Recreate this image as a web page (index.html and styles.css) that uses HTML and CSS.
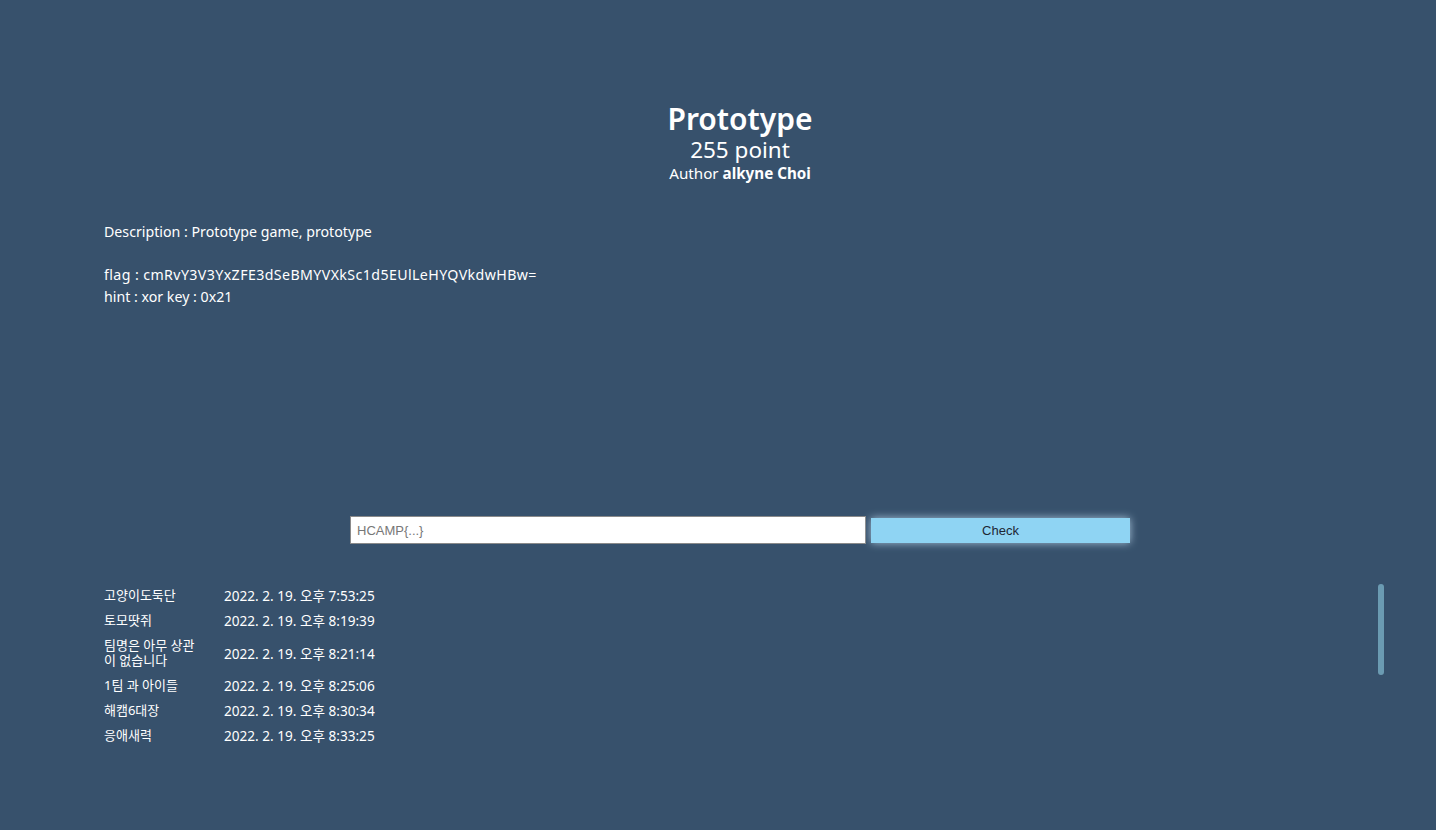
FILE: index.html
```html
<!DOCTYPE html>
<html lang="ko">
<head>
    <meta charset="UTF-8">
    <title>Prototype</title>
    <link rel="stylesheet" href="styles.css">
</head>
<body>

<div class="page">
    <div class="header">
        <h1>Prototype</h1>
        <div class="point">255 point</div>
        <div class="author">Author <b>alkyne Choi</b></div>
    </div>

    <div class="desc">
        <div>Description : Prototype game, prototype</div>
        <div>&nbsp;</div>
        <div class="flag">flag : cmRvY3V3YxZFE3dSeBMYVXkSc1d5EUlLeHYQVkdwHBw=</div>
        <div>hint : xor key : 0x21</div>
    </div>

    <form class="flag-form" onsubmit="return false">
        <input type="text" class="flag-input" placeholder="HCAMP{...}">
        <button class="check-btn">Check</button>
    </form>

    <div class="records">
        <div class="rows">
            <div class="row"><div class="team">고양이도둑단</div><div class="time">2022. 2. 19. 오후 7:53:25</div></div>
            <div class="row"><div class="team">토모땃쥐</div><div class="time">2022. 2. 19. 오후 8:19:39</div></div>
            <div class="row"><div class="team">팀명은 아무 상관이 없습니다</div><div class="time">2022. 2. 19. 오후 8:21:14</div></div>
            <div class="row"><div class="team">1팀 과 아이들</div><div class="time">2022. 2. 19. 오후 8:25:06</div></div>
            <div class="row"><div class="team">해캠6대장</div><div class="time">2022. 2. 19. 오후 8:30:34</div></div>
            <div class="row"><div class="team">응애새력</div><div class="time">2022. 2. 19. 오후 8:33:25</div></div>
        </div>
        <div class="thumb"></div>
    </div>
</div>

</body>
</html>
```

FILE: styles.css
```css
body {
    margin: 0;
    background-color: #37516c;
    color: #fff;
    font-family: 'Noto Sans', 'Noto Sans CJK KR', sans-serif;
}

.page {
    padding: 100px 60px 80px 104px;
    min-height: 650px;
}

.header {
    text-align: center;
}

.header h1 {
    margin: 0;
    font-size: 30px;
    line-height: 38px;
    font-weight: 600;
}

.point {
    font-size: 22.5px;
    line-height: 24px;
}

.author {
    font-size: 15.2px;
    line-height: 22px;
}

.author b {
    font-weight: 700;
}

.desc {
    margin-top: 37px;
    font-size: 14.2px;
    line-height: 21.5px;
}

.desc .flag {
    letter-spacing: 0.4px;
}

.flag-form {
    display: flex;
    justify-content: center;
    align-items: center;
    gap: 5px;
    margin: 209px 0 0;
}

.flag-input {
    box-sizing: border-box;
    width: 516px;
    height: 28px;
    margin: 0;
    padding: 0 6px;
    border: 1px solid #8a8a8a;
    background: #fff;
    font-family: 'Liberation Sans', Arial, sans-serif;
    font-size: 13px;
    color: #333;
}

.flag-input::placeholder {
    color: #777;
}

.check-btn {
    width: 259px;
    height: 25px;
    border: none;
    background-color: #8fd4f3;
    box-shadow: 0 0 8px rgba(200, 230, 250, 0.75);
    font-family: 'Liberation Sans', Arial, sans-serif;
    font-size: 13px;
    color: #1d2633;
    cursor: pointer;
}

.records {
    display: flex;
    margin: 39px -8px 0 0;
}

.rows {
    flex: 1;
}

.row {
    display: grid;
    grid-template-columns: 120px auto;
    align-items: center;
    padding: 5px 0;
    font-size: 13px;
    line-height: 15px;
}

.team {
    width: 96px;
}

.time {
    font-size: 13.6px;
}

.thumb {
    width: 6px;
    height: 91px;
    margin-top: 1px;
    border-radius: 3px;
    background-color: #6b9bb2;
}
```
